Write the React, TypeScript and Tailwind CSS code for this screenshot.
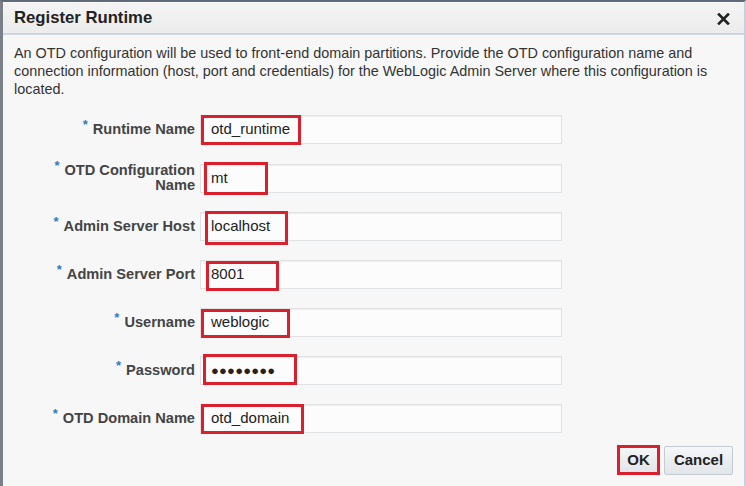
import React from 'react';

const fields = [
  { label: 'Runtime Name', value: 'otd_runtime', mark: 'left-0 -top-px w-[100px] h-[30px]' },
  { label: 'OTD Configuration Name', value: 'mt', mark: 'left-[3px] -top-[3px] w-[64px] h-[33px]' },
  { label: 'Admin Server Host', value: 'localhost', mark: 'left-[4px] -top-[2px] w-[83px] h-[34px]' },
  { label: 'Admin Server Port', value: '8001', mark: 'left-[5px] top-0 w-[73px] h-[30px]' },
  { label: 'Username', value: 'weblogic', mark: 'left-0 top-0 w-[89px] h-[29px]' },
  { label: 'Password', value: '●●●●●●●●', mark: 'left-[2px] -top-[3px] w-[94px] h-[31px]', secret: true },
  { label: 'OTD Domain Name', value: 'otd_domain', mark: 'left-0 -top-px w-[103px] h-[30px]' },
];

const App: React.FC = () => {
  return (
    <div className="w-[746px] h-[486px] overflow-hidden bg-[#f7f7f7] border-t-2 border-t-[#5f6b78] border-l-[3px] border-l-[#7b8088] border-r-2 border-r-[#c4d2de] flex flex-col font-['Liberation_Sans',Arial,sans-serif] text-[#333]">
      <div className="h-[33px] shrink-0 flex items-center justify-between pl-[11px] pr-[14px] bg-gradient-to-b from-[#f4f4f5] to-[#ececed] border-b-2 border-[#cdd6df] border-t border-t-[#fafafa]">
        <h1 className="text-[16.7px] font-bold text-[#222]">Register Runtime</h1>
        <svg width="13" height="12" viewBox="0 0 13 12" className="mt-px">
          <path d="M2 1.5 L11 10.5 M11 1.5 L2 10.5" stroke="#222" strokeWidth="2.6" strokeLinecap="square" />
        </svg>
      </div>

      <p className="mt-[9px] pl-[11px] pr-[20px] text-[14.4px] leading-[18px] text-[#333]">
        An OTD configuration will be used to front-end domain partitions. Provide the OTD configuration name and
        connection information (host, port and credentials) for the WebLogic Admin Server where this configuration is
        located.
      </p>

      <div className="mt-[17px] flex flex-col gap-[19px]">
        {fields.map((f) => (
          <div key={f.label} className="flex items-center">
            <div className="ml-[40px] w-[152px] text-right text-[14.6px] leading-[15px] font-bold text-[#444]">
              <span className="text-[#2b7bbf] text-[13px] relative -top-[5px] mr-[5px]">*</span>
              {f.label}
            </div>
            <div className="relative ml-[5px] w-[362px] h-[29px] bg-[#fcfcfd] border border-[#e0e2e4] shadow-[inset_0_1px_1px_rgba(0,0,0,0.06)] flex items-center pl-[10px]">
              <span className={f.secret ? 'text-[13px] tracking-[0.2px] text-[#222]' : 'text-[15px] text-[#222]'}>{f.value}</span>
              <div className={'absolute border-[3px] border-[#d9202c] ' + f.mark} />
            </div>
          </div>
        ))}
      </div>

      <div className="mt-auto mb-[11px] flex justify-end gap-[4px] pr-[11px]">
        <button className="w-[43px] h-[30px] border-[3px] border-[#d9202c] bg-gradient-to-b from-[#f4f6f8] to-[#e2e6ea] text-[15px] font-bold text-[#222]">
          OK
        </button>
        <button className="w-[69px] h-[29px] mt-[1px] rounded-[2px] border border-[#c3cbd3] bg-gradient-to-b from-[#f4f6f8] to-[#e2e6ea] text-[15px] font-bold text-[#222]">
          Cancel
        </button>
      </div>
    </div>
  );
};

export default App;
